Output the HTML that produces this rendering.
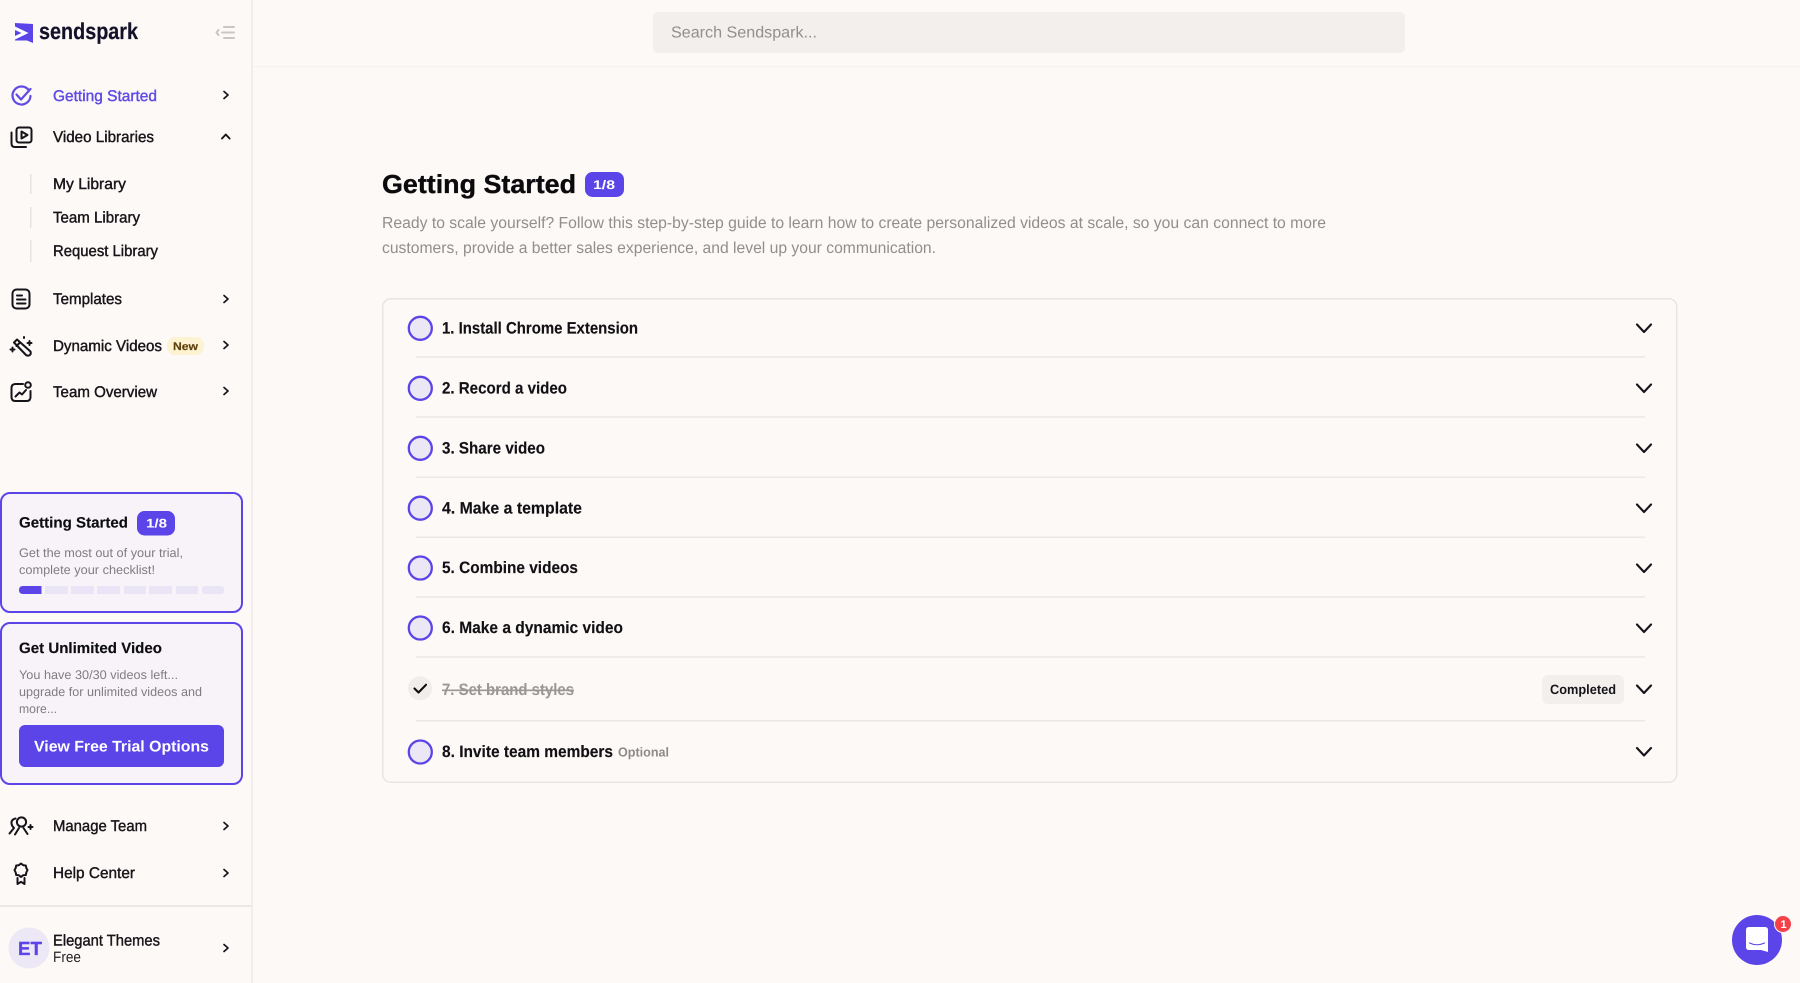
<!DOCTYPE html>
<html lang="en">
<head>
<meta charset="utf-8">
<title>Sendspark - Getting Started</title>
<style>
html,body{margin:0;padding:0;width:1800px;height:983px;overflow:hidden;background:#fdf9f6}
svg{display:block}
text{font-family:"Liberation Sans",sans-serif;text-rendering:geometricPrecision}
.n{font-size:15.5px;fill:#17151a;stroke:#17151a;stroke-width:.42}
.p{font-size:15.5px;fill:#5f4ae6;stroke:#5f4ae6;stroke-width:.42}
.b{font-weight:700}
.s{font-size:12.5px;fill:#7f7c82}
.t{font-size:15px;font-weight:700;fill:#0d0c0f;stroke:#0d0c0f;stroke-width:.15}
.r{font-size:16.5px;font-weight:700;fill:#111014;stroke:#111014;stroke-width:.15}
.g{font-size:16px;fill:#918e8c}
.ic{fill:none;stroke:#15141a;stroke-width:2;stroke-linecap:round;stroke-linejoin:round}
.c1{fill:#ebe7f5;stroke:#5b45e8;stroke-width:2.3}
.dv{stroke:#ece8e5;stroke-width:1.5}
</style>
</head>
<body>
<svg width="1800" height="983" viewBox="0 0 1800 983" xmlns="http://www.w3.org/2000/svg">
<defs>
<path id="cr" d="M224 -3.500L228 0L224 3.500" fill="none" stroke="#15141a" stroke-width="1.700" stroke-linecap="round" stroke-linejoin="round"/>
<path id="cd" d="M1637 -4L1644 3.500L1651 -4" fill="none" stroke="#15141a" stroke-width="2.100" stroke-linecap="round" stroke-linejoin="round"/>
</defs>

<rect width="1800" height="983" fill="#fdf9f6"/>
<rect x="251" y="0" width="2" height="983" fill="#f1edea"/>
<rect x="253" y="66" width="1547" height="1" fill="#f6f2ef"/>

<!-- logo -->
<path d="M15 23L33 24V43L27 40.500H15Z" fill="#5b45e8"/>
<path d="M15 26.500L28.500 33L15 39.500V36L21.500 33L15 30Z" fill="#fff"/>
<text x="39" y="39" font-size="23" class="b" fill="#14122a" stroke="#14122a" stroke-width=".2" textLength="99" lengthAdjust="spacingAndGlyphs">sendspark</text>
<g fill="none" stroke="#c9c6c4" stroke-width="2" stroke-linecap="round" stroke-linejoin="round">
<path d="M224 27H234M222 32.500H234M224 38H234"/><path d="M218.500 30L216.500 32.500L218.500 35"/>
</g>

<!-- search -->
<rect x="653" y="12" width="752" height="41" rx="5" fill="#f3efec"/>
<text x="671" y="37.500" class="g" textLength="146" lengthAdjust="spacingAndGlyphs" style="fill:#928f8d">Search Sendspark...</text>

<!-- nav -->
<path d="M29 90.500A9 9 0 1 0 30.500 96" fill="none" stroke="#5f4ae6" stroke-width="2.200" stroke-linecap="round"/>
<path d="M16.500 94.500L21 99.500L30.500 89" fill="none" stroke="#5f4ae6" stroke-width="2.200" stroke-linecap="round" stroke-linejoin="round"/>
<text x="53" y="100.800" class="p" textLength="104" lengthAdjust="spacingAndGlyphs">Getting Started</text>
<use href="#cr" y="95"/>

<rect x="16.500" y="127.500" width="15" height="15" rx="2.500" class="ic"/>
<path d="M21.500 131.500L27.500 135L21.500 138.500Z" class="ic" stroke-width="1.800"/>
<path d="M11.500 132.500V143.500Q11.500 147 15 147H26" class="ic"/>
<text x="53" y="141.800" class="n" textLength="101" lengthAdjust="spacingAndGlyphs">Video Libraries</text>
<path d="M222 138.500L225.800 134.500L229.600 138.500" fill="none" stroke="#15141a" stroke-width="1.900" stroke-linecap="round" stroke-linejoin="round"/>

<g fill="#e6e2df"><rect x="30" y="174" width="1.500" height="20"/><rect x="30" y="207" width="1.500" height="21"/><rect x="30" y="240" width="1.500" height="22"/></g>
<text x="53" y="189" class="n" textLength="73" lengthAdjust="spacingAndGlyphs">My Library</text>
<text x="53" y="222.700" class="n" textLength="87" lengthAdjust="spacingAndGlyphs">Team Library</text>
<text x="53" y="256" class="n" textLength="105" lengthAdjust="spacingAndGlyphs">Request Library</text>

<rect x="12.500" y="289.500" width="17" height="19" rx="4" class="ic"/>
<path d="M17 295.500H22M17 299.500H25.500M17 303.500H25.500" class="ic" stroke-width="1.800"/>
<text x="53" y="304" class="n" textLength="69" lengthAdjust="spacingAndGlyphs">Templates</text>
<use href="#cr" y="299"/>

<path d="M14 342.500L17 339.500L30.500 351.500Q31.500 354.500 29 355.500Q27.500 356 26 355Z" class="ic" stroke-width="1.900"/>
<path d="M16.500 346L20 342.500" class="ic" stroke-width="1.800"/>
<path d="M12.500 347.500V351.500M10.500 349.500H14.500M29.500 341V345M27.500 343H31.500M24 337V338" class="ic" stroke-width="1.500"/>
<text x="53" y="350.800" class="n" textLength="109" lengthAdjust="spacingAndGlyphs">Dynamic Videos</text>
<rect x="167" y="337" width="37" height="18" rx="8" fill="#fdf3d2"/>
<text x="173" y="350" font-size="11" class="b" fill="#5f3f0a" stroke="#5f3f0a" stroke-width=".15" textLength="25" lengthAdjust="spacingAndGlyphs">New</text>
<use href="#cr" y="345"/>

<path d="M23 384H15.500Q11.500 384 11.500 388V397Q11.500 401 15.500 401H26.500Q30.500 401 30.500 397V391" class="ic"/>
<circle cx="28" cy="385" r="2.800" class="ic" stroke-width="1.800"/>
<path d="M15.500 396.500L19.500 392.500L22 394.500L26 390" class="ic" stroke-width="1.800"/>
<text x="53" y="397" class="n" textLength="104" lengthAdjust="spacingAndGlyphs">Team Overview</text>
<use href="#cr" y="391"/>

<!-- card 1 -->
<rect x="1" y="493" width="241" height="119" rx="9" fill="#f7f3f8" stroke="#5b45e8" stroke-width="2"/>
<text x="19" y="527.700" class="t" textLength="109" lengthAdjust="spacingAndGlyphs">Getting Started</text>
<rect x="137" y="511" width="38" height="24.500" rx="7.500" fill="#5b45e8"/>
<text x="146" y="527.500" font-size="12.500" class="b" fill="#fff" textLength="21" lengthAdjust="spacingAndGlyphs">1/8</text>
<text x="19" y="557" class="s" textLength="164" lengthAdjust="spacingAndGlyphs">Get the most out of your trial,</text>
<text x="19" y="574" class="s" textLength="136" lengthAdjust="spacingAndGlyphs">complete your checklist!</text>
<g fill="#e9e4f6">
<rect x="45" y="586" width="23" height="8"/><rect x="71" y="586" width="23" height="8"/><rect x="97" y="586" width="23" height="8"/><rect x="124" y="586" width="22" height="8"/><rect x="149" y="586" width="23" height="8"/><rect x="176" y="586" width="22" height="8"/><rect x="202" y="586" width="22" height="8" rx="3"/>
</g>
<path d="M23 586H41.500V594H23Q19 594 19 590Q19 586 23 586Z" fill="#5b45e8"/>

<!-- card 2 -->
<rect x="1" y="623" width="241" height="161" rx="9" fill="#f7f3f8" stroke="#5b45e8" stroke-width="2"/>
<text x="19" y="653" class="t" textLength="143" lengthAdjust="spacingAndGlyphs">Get Unlimited Video</text>
<text x="19" y="679" class="s" textLength="159" lengthAdjust="spacingAndGlyphs">You have 30/30 videos left...</text>
<text x="19" y="696" class="s" textLength="183" lengthAdjust="spacingAndGlyphs">upgrade for unlimited videos and</text>
<text x="19" y="713" class="s" textLength="38" lengthAdjust="spacingAndGlyphs">more...</text>
<rect x="19" y="725" width="205" height="42" rx="6" fill="#5b45e8"/>
<text x="34" y="751.500" font-size="15.500" class="b" fill="#fff" textLength="175" lengthAdjust="spacingAndGlyphs">View Free Trial Options</text>

<!-- bottom nav -->
<circle cx="21.500" cy="822" r="4.600" class="ic"/>
<path d="M15 834.500L19 828M27.500 834L23.500 828" class="ic"/>
<path d="M15.500 818.500Q11 819.500 11.500 823.500Q11.800 826 14 828L9.500 833.500" class="ic" stroke-width="1.900"/>
<path d="M28.500 827H32.500M30.500 825V829" class="ic" stroke-width="1.800"/>
<text x="53" y="831" class="n" textLength="94" lengthAdjust="spacingAndGlyphs">Manage Team</text>
<use href="#cr" y="826"/>

<path d="M21 863.500L23.200 865.200L25.800 865.500L26.300 868L27.500 870L26.300 872.500L25.800 875L23.200 875.200L21 877L18.800 875.200L16.200 875L15.700 872.500L14.500 870L15.700 868L16.200 865.500L18.800 865.200Z" class="ic" stroke-width="1.900"/>
<path d="M17.500 878V884L21 881.800L24.500 884V878" class="ic" stroke-width="1.900"/>
<text x="53" y="878" class="n" textLength="82" lengthAdjust="spacingAndGlyphs">Help Center</text>
<use href="#cr" y="873"/>

<rect x="0" y="905" width="251" height="2" fill="#ece8e5"/>
<circle cx="29" cy="948" r="20.500" fill="#ede8f6"/>
<text x="18" y="955" font-size="19" class="b" fill="#5b45e8" stroke="#5b45e8" stroke-width=".3" textLength="24" lengthAdjust="spacingAndGlyphs">ET</text>
<text x="53" y="945.700" class="n" textLength="107" lengthAdjust="spacingAndGlyphs">Elegant Themes</text>
<text x="53" y="962" font-size="15" fill="#26242a" textLength="28" lengthAdjust="spacingAndGlyphs">Free</text>
<use href="#cr" y="948"/>

<!-- heading -->
<text x="382" y="193" font-size="26" class="b" fill="#0b0a0d" stroke="#0b0a0d" stroke-width=".35" textLength="194" lengthAdjust="spacingAndGlyphs">Getting Started</text>
<rect x="585" y="172" width="39" height="25" rx="7.500" fill="#5b45e8"/>
<text x="593" y="189" font-size="12.500" class="b" fill="#fff" textLength="22" lengthAdjust="spacingAndGlyphs">1/8</text>
<text x="382" y="228" class="g" textLength="944" lengthAdjust="spacingAndGlyphs">Ready to scale yourself? Follow this step-by-step guide to learn how to create personalized videos at scale, so you can connect to more</text>
<text x="382" y="253" class="g" textLength="554" lengthAdjust="spacingAndGlyphs">customers, provide a better sales experience, and level up your communication.</text>

<!-- checklist -->
<rect x="382.750" y="298.750" width="1294" height="483.500" rx="8" fill="#fdf9f6" stroke="#e9e5e2" stroke-width="1.500"/>

<g class="dv">
<path d="M416 357H1645M416 417H1645M416 477.300H1645M416 537.300H1645M416 597H1645M416 657H1645M416 720.700H1645"/>
</g>

<circle cx="420.300" cy="328.300" r="11.500" class="c1"/>
<circle cx="420.300" cy="388.300" r="11.500" class="c1"/>
<circle cx="420.300" cy="448.300" r="11.500" class="c1"/>
<circle cx="420.300" cy="508.200" r="11.500" class="c1"/>
<circle cx="420.300" cy="568" r="11.500" class="c1"/>
<circle cx="420.300" cy="628" r="11.500" class="c1"/>
<circle cx="420.300" cy="752" r="11.500" class="c1"/>
<circle cx="420" cy="688.300" r="12" fill="#f1edea"/>
<path d="M414.500 688.500L418.500 692.500L426 684.800" fill="none" stroke="#0d0c0f" stroke-width="2.100" stroke-linecap="round" stroke-linejoin="round"/>

<text x="442" y="333.700" class="r" textLength="196" lengthAdjust="spacingAndGlyphs">1. Install Chrome Extension</text>
<text x="442" y="393.500" class="r" textLength="125" lengthAdjust="spacingAndGlyphs">2. Record a video</text>
<text x="442" y="453.300" class="r" textLength="103" lengthAdjust="spacingAndGlyphs">3. Share video</text>
<text x="442" y="513.300" class="r" textLength="140" lengthAdjust="spacingAndGlyphs">4. Make a template</text>
<text x="442" y="573.200" class="r" textLength="136" lengthAdjust="spacingAndGlyphs">5. Combine videos</text>
<text x="442" y="633" class="r" textLength="181" lengthAdjust="spacingAndGlyphs">6. Make a dynamic video</text>
<text x="442" y="695" class="r" style="fill:#9a9795;stroke:none;text-decoration:line-through" textLength="132" lengthAdjust="spacingAndGlyphs">7. Set brand styles</text>
<text x="442" y="757" class="r" textLength="171" lengthAdjust="spacingAndGlyphs">8. Invite team members</text>
<text x="618" y="756.500" font-size="13" class="b" fill="#8d8a88" textLength="51" lengthAdjust="spacingAndGlyphs">Optional</text>

<rect x="1542" y="675" width="82" height="29" rx="6" fill="#f3efec"/>
<text x="1550" y="694" font-size="13.500" class="b" fill="#15141a" textLength="66" lengthAdjust="spacingAndGlyphs">Completed</text>

<use href="#cd" y="328.500"/>
<use href="#cd" y="388.500"/>
<use href="#cd" y="448.500"/>
<use href="#cd" y="508.500"/>
<use href="#cd" y="568.500"/>
<use href="#cd" y="628.500"/>
<use href="#cd" y="689.500"/>
<use href="#cd" y="752"/>

<!-- chat -->
<circle cx="1757" cy="940" r="25" fill="#5b45e8"/>
<path d="M1749 927H1765Q1768 927 1768 930V952L1761 950H1749Q1746 950 1746 947V930Q1746 927 1749 927Z" fill="#fff"/>
<path d="M1749.500 943Q1757 946.500 1764.500 943" fill="none" stroke="#5b45e8" stroke-width="1.100" stroke-linecap="round"/>
<circle cx="1783" cy="924" r="9" fill="#fdf9f6"/>
<circle cx="1783" cy="924" r="8" fill="#f5424a"/>
<text x="1780.500" y="928" font-size="11" class="b" fill="#fff">1</text>
</svg>
</body>
</html>
